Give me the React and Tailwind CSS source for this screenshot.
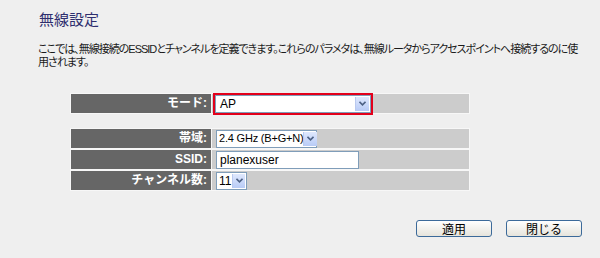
import React from "react";

const Arrow = ({ w = 14 }) => (
  <div
    className="flex items-center justify-center h-full border-l border-[#b9c9ef] bg-gradient-to-b from-[#dfe8fd] to-[#b8cbf6]"
    style={{ width: w }}
  >
    <svg width="7" height="5" viewBox="0 0 7 5">
      <path d="M0.5 0.8 L3.5 3.8 L6.5 0.8" fill="none" stroke="#4d6185" strokeWidth="1.6" />
    </svg>
  </div>
);

const Label = ({ children }) => (
  <div className="w-[140px] shrink-0 bg-[#666666] text-white font-bold text-[12px] leading-[19px] text-right pr-[4px] [font-family:'Liberation_Sans','Noto_Sans_CJK_JP',sans-serif]">
    {children}
  </div>
);

export default function App() {
  return (
    <div className="w-[600px] h-[258px] bg-[#efefef] overflow-hidden [font-family:'Liberation_Sans','Noto_Sans_CJK_JP',sans-serif] text-[#1a1a1a]">
      <div className="pl-[38px] pt-[9px]">
        <div className="pl-[1px] text-[15px] leading-[20px] text-[#2e2e6e] [font-family:'Noto_Sans_CJK_JP',sans-serif]">
          無線設定
        </div>
        <div className="mt-[14px] text-[11px] leading-[13px] whitespace-nowrap [font-feature-settings:'palt'] tracking-[-1px]">
          ここでは、無線接続のESSIDとチャンネルを定義できます。これらのパラメタは、無線ルータからアクセスポイントへ接続するのに使
          <br />
          用されます。
        </div>
      </div>

      {/* Mode table */}
      <div className="ml-[70px] mt-[24px] w-[400px] bg-[#f7f7f7] p-[1px]">
        <div className="flex h-[19px] gap-[1px]">
          <Label>モード:</Label>
          <div className="flex-1 bg-[#cccccc] flex items-center pl-[1px]">
            <div className="h-[22px] w-[160px] border-2 border-[#e2001a] shrink-0">
              <div className="h-full bg-white border border-[#7f9db9] flex items-center">
                <div className="flex-1 text-[12px] pl-[4px] text-black">AP</div>
                <div className="h-full py-[1px] pr-[1px]">
                  <Arrow w={14} />
                </div>
              </div>
            </div>
          </div>
        </div>
      </div>

      {/* Settings table */}
      <div className="ml-[70px] mt-[14px] w-[400px] bg-[#f7f7f7] p-[1px] flex flex-col gap-[2px]">
        <div className="flex h-[19px] gap-[1px]">
          <Label>帯域:</Label>
          <div className="flex-1 bg-[#cccccc] flex items-center pl-[4px]">
            <div className="h-[18px] w-[101px] bg-white border border-[#7f9db9] flex items-center">
              <div className="flex-1 text-[11px] tracking-[-0.2px] pl-[2px] text-black whitespace-nowrap">
                2.4 GHz (B+G+N)
              </div>
              <div className="h-full py-[1px] pr-[1px]">
                <Arrow w={14} />
              </div>
            </div>
          </div>
        </div>
        <div className="flex h-[19px] gap-[1px]">
          <Label>SSID:</Label>
          <div className="flex-1 bg-[#cccccc] flex items-center pl-[4px]">
            <div className="h-[18px] w-[143px] bg-white border border-[#7f9db9] flex items-center text-[12px] pl-[3px] text-black">
              planexuser
            </div>
          </div>
        </div>
        <div className="flex h-[19px] gap-[1px]">
          <Label>チャンネル数:</Label>
          <div className="flex-1 bg-[#cccccc] flex items-center pl-[4px]">
            <div className="h-[18px] w-[31px] bg-white border border-[#7f9db9] flex items-center">
              <div className="flex-1 text-[12px] pl-[2px] text-black">11</div>
              <div className="h-full py-[1px] pr-[1px]">
                <Arrow w={13} />
              </div>
            </div>
          </div>
        </div>
      </div>

      {/* Buttons */}
      <div className="flex justify-end gap-[14px] pr-[18px] mt-[29px]">
        <button className="w-[76px] h-[17px] rounded-[3px] border border-[#3c6a9a] bg-gradient-to-b from-[#ffffff] to-[#e6e4dc] text-[12px] leading-[15px] text-black [font-family:'Noto_Sans_CJK_JP',sans-serif]">
          適用
        </button>
        <button className="w-[76px] h-[17px] rounded-[3px] border border-[#3c6a9a] bg-gradient-to-b from-[#ffffff] to-[#e6e4dc] text-[12px] leading-[15px] text-black [font-family:'Noto_Sans_CJK_JP',sans-serif]">
          閉じる
        </button>
      </div>
    </div>
  );
}
